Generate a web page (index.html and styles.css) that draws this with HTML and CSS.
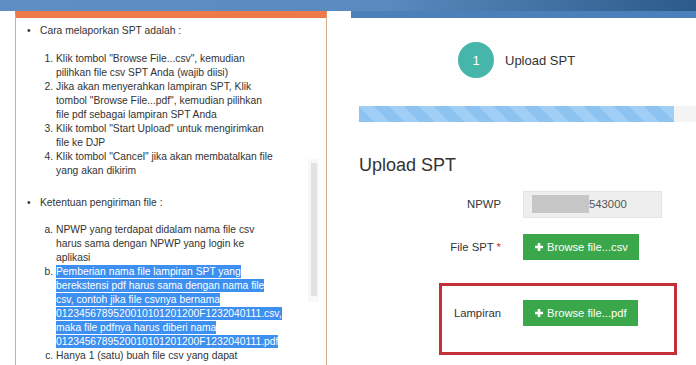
FILE: index.html
```html
<!DOCTYPE html>
<html lang="id">
<head>
  <meta charset="UTF-8">
  <meta name="viewport" content="width=device-width, initial-scale=1.0">
  <title>Upload SPT</title>
  <link rel="stylesheet" href="styles.css">
</head>
<body>
  <div class="topbar"></div>

  <div class="main">
    <!-- Petunjuk -->
    <div class="guide">
      <div class="scroll-track"><div class="scroll-thumb"></div></div>
      <ul class="guide-list">
        <li>Cara melaporkan SPT adalah :
          <ol>
            <li>Klik tombol "Browse File...csv", kemudian<br>pilihkan file csv SPT Anda (wajib diisi)</li>
            <li>Jika akan menyerahkan lampiran SPT, Klik<br>tombol "Browse File...pdf", kemudian pilihkan<br>file pdf sebagai lampiran SPT Anda</li>
            <li>Klik tombol "Start Upload" untuk mengirimkan<br>file ke DJP</li>
            <li>Klik tombol "Cancel" jika akan membatalkan file<br>yang akan dikirim</li>
          </ol>
        </li>
        <li>Ketentuan pengiriman file :
          <ol class="alpha">
            <li>NPWP yang terdapat didalam nama file csv<br>harus sama dengan NPWP yang login ke<br>aplikasi</li>
            <li><span class="selected">Pemberian nama file lampiran SPT yang<br>berekstensi pdf harus sama dengan nama file<br>csv, contoh jika file csvnya bernama<br>0123456789520010101201200F1232040111.csv,<br>maka file pdfnya harus diberi nama<br>0123456789520010101201200F1232040111.pdf</span></li>
            <li>Hanya 1 (satu) buah file csv yang dapat</li>
          </ol>
        </li>
      </ul>
    </div>

    <!-- Form upload -->
    <div class="upload">
      <div class="wizard">
        <span class="wizard-num">1</span>
        <span class="wizard-label">Upload SPT</span>
      </div>

      <div class="progress"><div class="progress-bar" style="width: 315px"></div></div>

      <h3>Upload SPT</h3>

      <div class="form-row">
        <label>NPWP</label>
        <div class="field">
          <div class="input-static"><span class="redact"></span>543000</div>
        </div>
      </div>

      <div class="form-row">
        <label>File SPT <span class="req">*</span></label>
        <div class="field">
          <button class="btn-browse">
            <svg width="8" height="8" viewBox="0 0 8 8"><path d="M2.7 0h2.6v2.7H8v2.6H5.3V8H2.7V5.3H0V2.7h2.7z" fill="#fff"/></svg>
            Browse file...csv
          </button>
        </div>
      </div>

      <div class="form-row marked">
        <label>Lampiran</label>
        <div class="field">
          <button class="btn-browse">
            <svg width="8" height="8" viewBox="0 0 8 8"><path d="M2.7 0h2.6v2.7H8v2.6H5.3V8H2.7V5.3H0V2.7h2.7z" fill="#fff"/></svg>
            Browse file...pdf
          </button>
        </div>
      </div>

      <p class="hint">(ukuran file maksimal 5 MB)</p>
    </div>
  </div>
</body>
</html>
```

FILE: styles.css
```css
/* General */
body {
  margin: 0;
  font-family: "Liberation Sans", Arial, sans-serif;
  color: #333;
  background: #fff;
  overflow: hidden;
}

.topbar {
  height: 11px;
  background: linear-gradient(to right, #5e8fc2 0%, #5a8abe 55%, #2c5a8a 100%);
}

.main {
  display: flex;
  align-items: flex-start;
}

/* Left panel */
.guide {
  position: relative;
  flex: none;
  width: 312px;
  height: 360px;
  margin-left: 15px;
  box-sizing: border-box;
  border: 1px solid #d9ab8d;
  border-top: 7px solid #ef7a49;
  padding-top: 6px;
  overflow: hidden;
  font-size: 10.3px;
  line-height: 14px;
}

.scroll-track {
  position: absolute;
  left: 292px;
  top: 141px;
  width: 11px;
  height: 143px;
  background: #f8f8f8;
}

.scroll-thumb {
  margin: 4px 0 0 3px;
  width: 6px;
  height: 133px;
  background: #e2e2e2;
}

.guide-list {
  list-style: none;
  margin: 0;
  padding-left: 24px;
}

.guide-list > li::before {
  content: "\2022";
  display: inline-block;
  width: 13px;
  margin-left: -13px;
}

.guide-list > li + li {
  margin-top: 18px;
}

.guide-list ol {
  margin: 13.5px 0 0;
  padding-left: 16px;
}

.guide-list ol.alpha {
  list-style: lower-alpha;
}

.selected {
  background: #3d8ff0;
  color: #fff;
  padding: 1px 0;
}

/* Right column */
.upload {
  flex: none;
  width: 400px;
  margin-left: 24px;
  border-top: 7px solid #4a81bb;
  padding-left: 8px;
}

.wizard {
  display: flex;
  align-items: center;
  padding: 24px 0 0 99px;
}

.wizard-num {
  width: 36px;
  height: 36px;
  border-radius: 50%;
  background: #46b5aa;
  color: #fff;
  font-size: 13px;
  display: flex;
  align-items: center;
  justify-content: center;
}

.wizard-label {
  margin-left: 11px;
  font-size: 13px;
}

.progress {
  margin-top: 28px;
  height: 16px;
  background: #f4f4f4;
}

.progress-bar {
  height: 100%;
  background-color: #8cc3f1;
  background-image: linear-gradient(45deg, rgba(255,255,255,.18) 25%, transparent 25%, transparent 50%, rgba(255,255,255,.18) 50%, rgba(255,255,255,.18) 75%, transparent 75%, transparent);
  background-size: 30px 30px;
}

h3 {
  margin: 32.5px 0 0;
  font-size: 18px;
  line-height: 20px;
  font-weight: normal;
}

.form-row {
  display: grid;
  grid-template-columns: 153px 1fr;
  align-items: center;
  margin-top: 16px;
  font-size: 11.3px;
}

.form-row:first-of-type {
  margin-top: 15.5px;
}

.form-row label {
  text-align: right;
  padding-right: 11px;
}

.field {
  padding-left: 11px;
}

.req {
  color: #d2322d;
}

.input-static {
  width: 139px;
  height: 27px;
  box-sizing: border-box;
  background: #eee;
  border: 1px solid #e4e4e4;
  padding-left: 8px;
  display: flex;
  align-items: center;
  color: #555;
}

.redact {
  width: 57px;
  height: 18px;
  background: #c6c6c6;
}

.btn-browse {
  height: 26px;
  padding: 0 11px 0 12px;
  border: none;
  background: #3aa84a;
  color: #fff;
  font-family: inherit;
  font-size: 11.2px;
  display: inline-flex;
  align-items: center;
  gap: 4px;
  cursor: pointer;
}

/* annotated row */
.form-row.marked {
  margin: 23px 0 0 80px;
  width: 238px;
  box-sizing: border-box;
  border: 3px solid #c4303a;
  padding: 14px 0 26px;
  grid-template-columns: 70px 1fr;
}

.hint {
  margin: 7px 0 0;
  padding-left: 164px;
  font-size: 11px;
  line-height: 14px;
  color: #999;
}
```
